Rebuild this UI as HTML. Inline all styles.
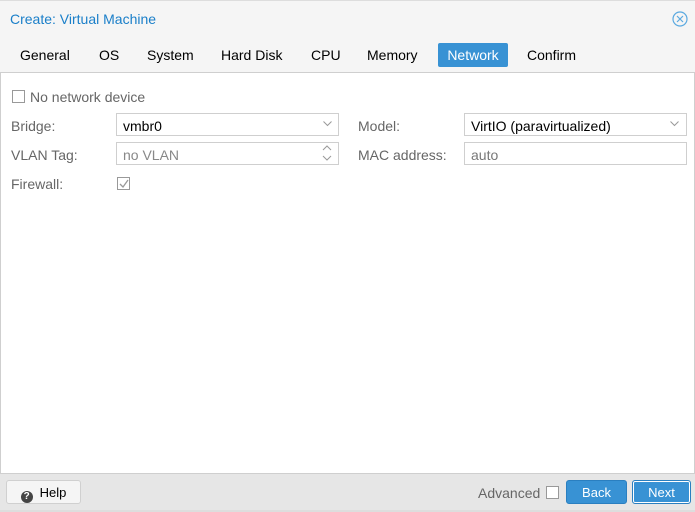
<!DOCTYPE html>
<html><head><style>
*{box-sizing:border-box;margin:0;padding:0}
body{width:695px;height:512px;overflow:hidden;font-family:"Liberation Sans",sans-serif;font-size:14px;background:#fff;position:relative}
.a{position:absolute;white-space:nowrap}
.hdr{left:0;top:0;width:695px;height:73px;background:#f5f5f5;border-top:1px solid #ddd;border-bottom:1px solid #cfcfcf}
.tab{top:43px;height:24px;line-height:24px;padding:0 9px;color:#000}
.lbl{color:#666}
.fld{height:23px;border:1px solid #cfcfcf;line-height:24px;padding-left:6px;background:#fff}
.btn{height:24px;line-height:22px;text-align:center;border-radius:3px}
</style></head><body>
<div class="a" style="left:0;top:73px;width:1px;height:400px;background:#cfcfcf"></div>
<div class="a" style="left:694px;top:73px;width:1px;height:400px;background:#cfcfcf"></div>
<div class="a hdr"></div>
<div class="a" style="left:10px;top:11px;color:#1a7fc9;font-size:14px">Create: Virtual Machine</div>
<svg class="a" style="left:672px;top:11px" width="16" height="16" viewBox="0 0 16 16"><circle cx="8" cy="8" r="7" fill="none" stroke="#5aa9e0" stroke-width="1.2"/><path d="M5 5L11 11M11 5L5 11" stroke="#5aa9e0" stroke-width="1.2"/></svg>
<div class="a tab" style="left:11px">General</div>
<div class="a tab" style="left:90px">OS</div>
<div class="a tab" style="left:138px">System</div>
<div class="a tab" style="left:212px">Hard Disk</div>
<div class="a tab" style="left:302px">CPU</div>
<div class="a tab" style="left:358px">Memory</div>
<div class="a tab" style="left:438px;width:70px;padding:0;text-align:center;background:#3892d4;color:#fff;border-radius:2px">Network</div>
<div class="a tab" style="left:518px">Confirm</div>

<div class="a" style="left:12px;top:90px;width:13px;height:13px;border:1px solid #999"></div>
<div class="a lbl" style="left:30px;top:89px">No network device</div>

<div class="a lbl" style="left:11px;top:118px">Bridge:</div>
<div class="a fld" style="left:116px;top:113px;width:223px">vmbr0</div>
<svg class="a" style="left:323px;top:121px" width="9" height="6"><path d="M0.5 0.5L4.5 4.5L8.5 0.5" fill="none" stroke="#999"/></svg>
<div class="a lbl" style="left:11px;top:147px">VLAN Tag:</div>
<div class="a fld" style="left:116px;top:142px;width:223px;color:#888">no VLAN</div>
<svg class="a" style="left:322px;top:145px" width="10" height="16"><path d="M1 5L5 1L9 5M1 11L5 15L9 11" fill="none" stroke="#999"/></svg>
<div class="a lbl" style="left:11px;top:176px">Firewall:</div>
<div class="a" style="left:117px;top:177px;width:13px;height:13px;border:1px solid #999"></div>
<svg class="a" style="left:118px;top:178px" width="12" height="12"><path d="M2 6L5 9L10 2" fill="none" stroke="#999" stroke-width="1.3"/></svg>

<div class="a lbl" style="left:358px;top:118px">Model:</div>
<div class="a fld" style="left:464px;top:113px;width:223px">VirtIO (paravirtualized)</div>
<svg class="a" style="left:670px;top:121px" width="9" height="6"><path d="M0.5 0.5L4.5 4.5L8.5 0.5" fill="none" stroke="#999"/></svg>
<div class="a lbl" style="left:358px;top:147px">MAC address:</div>
<div class="a fld" style="left:464px;top:142px;width:223px;color:#777">auto</div>

<div class="a" style="left:0;top:473px;width:695px;height:39px;background:#e6e6e6;border-top:1px solid #cfcfcf;border-bottom:2px solid #ddd"></div>
<div class="a btn" style="left:6px;top:480px;width:75px;background:#f5f5f5;border:1px solid #d0d0d0;font-size:13px;line-height:23px"><span style="display:inline-block;width:12px;height:12px;border-radius:50%;background:#444;color:#fff;font-size:10px;line-height:12px;font-weight:bold;vertical-align:-2px;margin-right:7px">?</span>Help</div>
<div class="a lbl" style="left:478px;top:485px">Advanced</div>
<div class="a" style="left:546px;top:486px;width:13px;height:13px;border:1px solid #999;background:#fff"></div>
<div class="a btn" style="left:566px;top:480px;width:61px;background:#3892d4;border:1px solid #2a7fc0;color:#fff;font-size:13px;line-height:23px">Back</div>
<div class="a btn" style="left:632px;top:480px;width:59px;background:#3892d4;border:1px solid #2a7fc0;box-shadow:inset 0 0 0 1px #fff;color:#fff;font-size:13px;line-height:23px">Next</div>
</body></html>
